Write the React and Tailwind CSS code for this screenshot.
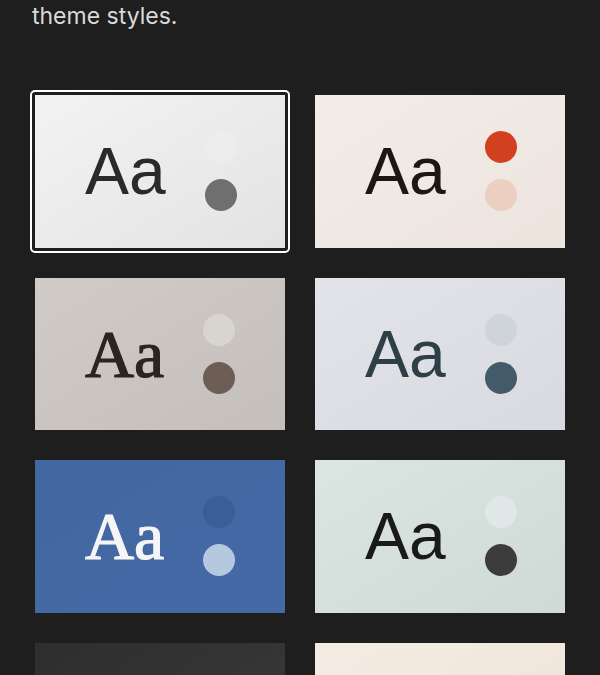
import React from "react";

const cards = [
  { bg: "bg-linear-to-br from-[#f3f3f3] to-[#e3e3e3]", text: "text-[#2a2a2a]", serif: false, d1: "bg-[#ededed]", d2: "bg-[#6f6f6f]", selected: true, label: true },
  { bg: "bg-linear-to-br from-[#f3ece8] to-[#ede4de]", text: "text-[#1e1614]", serif: false, d1: "bg-[#d3401f]", d2: "bg-[#ebd0c1]", label: true },
  { bg: "bg-linear-to-br from-[#d0cbc7] to-[#c4bfba]", text: "text-[#2b2420]", serif: true, d1: "bg-[#d8d4d0]", d2: "bg-[#6c5e55]", label: true },
  { bg: "bg-linear-to-br from-[#e3e4e9] to-[#d8dadf]", text: "text-[#2e3f48]", serif: false, d1: "bg-[#cfd4da]", d2: "bg-[#435b69]", label: true },
  { bg: "bg-linear-to-br from-[#4367a0] to-[#4469a5]", text: "text-[#f5f5f5]", serif: true, d1: "bg-[#3a5f96]", d2: "bg-[#b6c7e0]", label: true },
  { bg: "bg-linear-to-br from-[#dbe5e2] to-[#cfd9d5]", text: "text-[#1a1a1a]", serif: false, d1: "bg-[#dfe8e6]", d2: "bg-[#3c3c3c]", label: true },
  { bg: "bg-linear-to-br from-[#2e2e2e] to-[#3b3b3b]", d1: "bg-[#555555]", d2: "bg-[#bbbbbb]", label: false },
  { bg: "bg-linear-to-br from-[#f4ece3] to-[#eee3d6]", d1: "bg-[#c9794a]", d2: "bg-[#e7d6c4]", label: false },
];

function Card({ c }) {
  return (
    <div className="relative">
      {c.selected && (
        <div className="pointer-events-none absolute -inset-[5px] rounded-[5px] border-2 border-white" />
      )}
      <div className={`flex h-[152.5px] w-[250px] items-center pl-[50px] ${c.bg}`}>
        {c.label && (
          <>
            {c.serif ? (
              <div
                className={`w-[118px] text-[68px] leading-none [-webkit-text-stroke:1.2px_currentColor] ${c.text}`}
                style={{ fontFamily: '"Liberation Serif", "Times New Roman", serif' }}
              >
                Aa
              </div>
            ) : (
              <div
                className={`w-[120px] text-[66px] leading-none ${c.text}`}
                style={{ fontFamily: '"Liberation Sans", Arial, sans-serif' }}
              >
                Aa
              </div>
            )}
            <div className="flex flex-col gap-4">
              <div className={`h-8 w-8 rounded-full ${c.d1}`} />
              <div className={`h-8 w-8 rounded-full ${c.d2}`} />
            </div>
          </>
        )}
      </div>
    </div>
  );
}

export default function App() {
  return (
    <div className="h-[675px] w-full overflow-hidden bg-[#1e1e1e] pl-[32px]">
      <div
        className="pt-[2px] text-[23px] leading-[28px] text-[#dadada]"
        style={{ fontFamily: 'Inter, "Liberation Sans", sans-serif' }}
      >
        theme styles.
      </div>
      <div className="ml-[3px] mt-[65px] grid w-[530px] grid-cols-[250px_250px] gap-x-[30px] gap-y-[30px]">
        {cards.map((c, i) => (
          <Card key={i} c={c} />
        ))}
      </div>
    </div>
  );
}
